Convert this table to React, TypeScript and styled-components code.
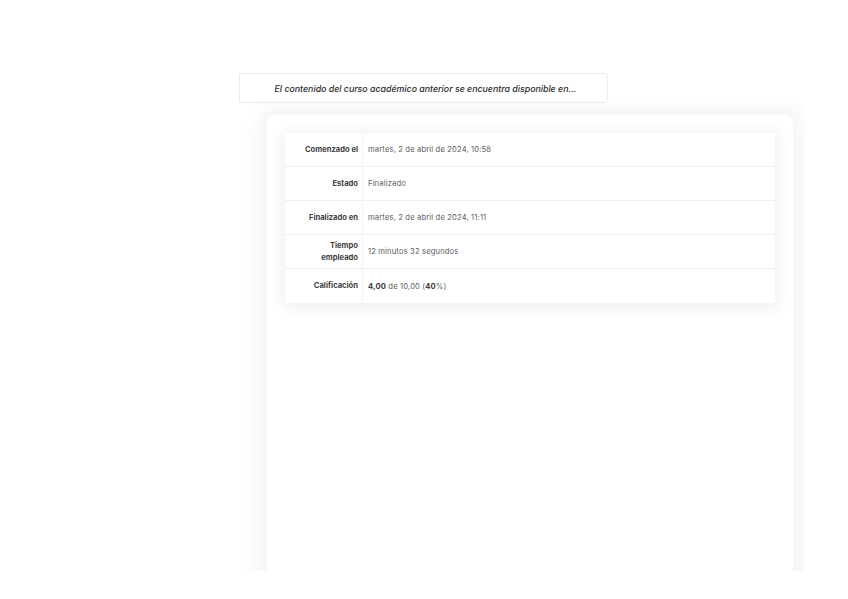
import React from "react";
import styled, { createGlobalStyle } from "styled-components";

const GlobalStyle = createGlobalStyle`
  html, body {
    margin: 0;
    padding: 0;
    background: #ffffff;
    font-family: Inter, "Liberation Sans", sans-serif;
  }
`;

const SPage = styled.div`
  width: 848px;
  height: 599px;
  overflow: hidden;
  padding: 73px 0 0 239px;
  box-sizing: border-box;
  display: flex;
  flex-direction: column;
  align-items: flex-start;
`;

const SNotice = styled.div`
  width: 369px;
  height: 30px;
  box-sizing: border-box;
  border: 1px solid #ececec;
  border-radius: 2px;
  display: flex;
  align-items: center;
  justify-content: center;
  padding-left: 4px;
  font-size: 8.8px;
  font-weight: 500;
  font-style: italic;
  color: #2a2a2a;
`;

const SClip = styled.div`
  margin: 0 0 0 -12px;
  padding: 0 12px;
  height: 468px;
  overflow: hidden;
`;

const SPanel = styled.div`
  margin: 12px 0 0 28px;
  width: 526px;
  height: 500px;
  box-sizing: border-box;
  padding: 18px;
  background: #ffffff;
  border-radius: 8px 8px 0 0;
  box-shadow: 0 0 22px 8px rgba(0, 0, 0, 0.05);
`;

const STable = styled.div`
  width: 490px;
  background: #ffffff;
  box-shadow: 0 2px 14px 3px rgba(0, 0, 0, 0.065);
  display: flex;
  flex-direction: column;
`;

const SRow = styled.div<{ $last?: boolean }>`
  display: grid;
  grid-template-columns: 78px 1fr;
  height: 34px;
  box-sizing: border-box;
  border-bottom: ${(p) => (p.$last ? "none" : "1px solid #efefef")};
`;

const SLabel = styled.div`
  display: flex;
  align-items: center;
  justify-content: flex-end;
  text-align: right;
  padding-right: 4px;
  border-right: 1px solid #f3f3f3;
  font-size: 7.6px;
  font-weight: 700;
  line-height: 12px;
  color: #404040;
`;

const SValue = styled.div`
  display: flex;
  align-items: center;
  padding-left: 5px;
  font-size: 7.6px;
  color: #5c5c5c;
  letter-spacing: 0.15px;

  b {
    font-weight: 700;
    color: #3a3a3a;
  }
`;

const rows: { label: React.ReactNode; value: React.ReactNode }[] = [
  { label: "Comenzado el", value: "martes, 2 de abril de 2024, 10:58" },
  { label: "Estado", value: "Finalizado" },
  { label: "Finalizado en", value: "martes, 2 de abril de 2024, 11:11" },
  {
    label: (
      <>
        Tiempo
        <br />
        empleado
      </>
    ),
    value: "12 minutos 32 segundos",
  },
  {
    label: "Calificación",
    value: (
      <>
        <b>4,00</b>&nbsp;de 10,00 (<b>40</b>%)
      </>
    ),
  },
];

const App = () => {
  return (
    <>
      <GlobalStyle />
      <SPage>
        <SNotice>
          El contenido del curso académico anterior se encuentra disponible en...
        </SNotice>
        <SClip>
          <SPanel>
            <STable>
              {rows.map((r, i) => (
                <SRow key={i} $last={i === rows.length - 1}>
                  <SLabel>{r.label}</SLabel>
                  <SValue>{r.value}</SValue>
                </SRow>
              ))}
            </STable>
          </SPanel>
        </SClip>
      </SPage>
    </>
  );
};

export default App;
